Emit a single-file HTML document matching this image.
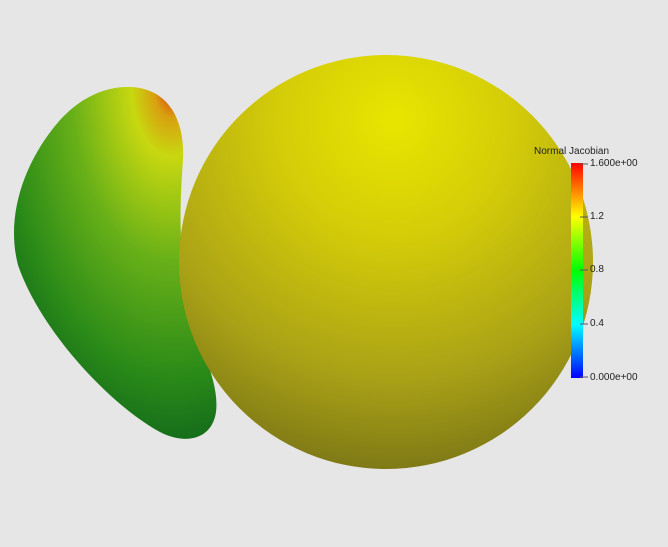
<!DOCTYPE html>
<html><head><style>
html,body{margin:0;padding:0;background:#e6e6e6;width:668px;height:547px;overflow:hidden;font-family:"Liberation Sans",sans-serif}
.t{position:absolute;font-size:10px;color:#222}
</style></head><body>
<svg width="668" height="547" style="position:absolute;left:0;top:0">
<defs>
<radialGradient id="sg" cx="0.52" cy="0.16" r="0.95">
<stop offset="0" stop-color="#e8e600"/>
<stop offset="0.3" stop-color="#d4cc08"/>
<stop offset="0.65" stop-color="#aaa216"/>
<stop offset="1" stop-color="#6a6616"/>
</radialGradient>
<radialGradient id="bg" cx="0.78" cy="0.0" r="1.1">
<stop offset="0" stop-color="#e03010"/>
<stop offset="0.08" stop-color="#d8a010"/>
<stop offset="0.18" stop-color="#c8d810"/>
<stop offset="0.45" stop-color="#68b018"/>
<stop offset="0.75" stop-color="#2a8a18"/>
<stop offset="1" stop-color="#0a5e1c"/>
</radialGradient>
<linearGradient id="cb" x1="0" y1="1" x2="0" y2="0">
<stop offset="0" stop-color="#0000ff"/>
<stop offset="0.25" stop-color="#00ffff"/>
<stop offset="0.5" stop-color="#00ff00"/>
<stop offset="0.75" stop-color="#ffff00"/>
<stop offset="1" stop-color="#ff0000"/>
</linearGradient>
</defs>
<path d="M130,87 C165,88 185,115 183,160 C180,200 178,250 188,300 C196,340 220,380 216,412 C212,440 185,445 160,432 C110,405 40,330 18,265 C5,215 25,160 60,120 C80,98 105,86 130,87 Z" fill="url(#bg)"/>
<circle cx="386" cy="262" r="207" fill="url(#sg)"/>
<rect x="571" y="163" width="12" height="215" fill="url(#cb)"/>
<g stroke="#555" stroke-width="1">
<line x1="580" y1="164" x2="588" y2="164"/><line x1="580" y1="217" x2="588" y2="217"/>
<line x1="580" y1="270" x2="588" y2="270"/><line x1="580" y1="324" x2="588" y2="324"/>
<line x1="580" y1="377" x2="588" y2="377"/>
</g>
</svg>
<div class="t" style="left:534px;top:146px">Normal Jacobian</div>
<div class="t" style="left:590px;top:158px">1.600e+00</div>
<div class="t" style="left:590px;top:211px">1.2</div>
<div class="t" style="left:590px;top:264px">0.8</div>
<div class="t" style="left:590px;top:318px">0.4</div>
<div class="t" style="left:590px;top:372px">0.000e+00</div>
</body></html>
